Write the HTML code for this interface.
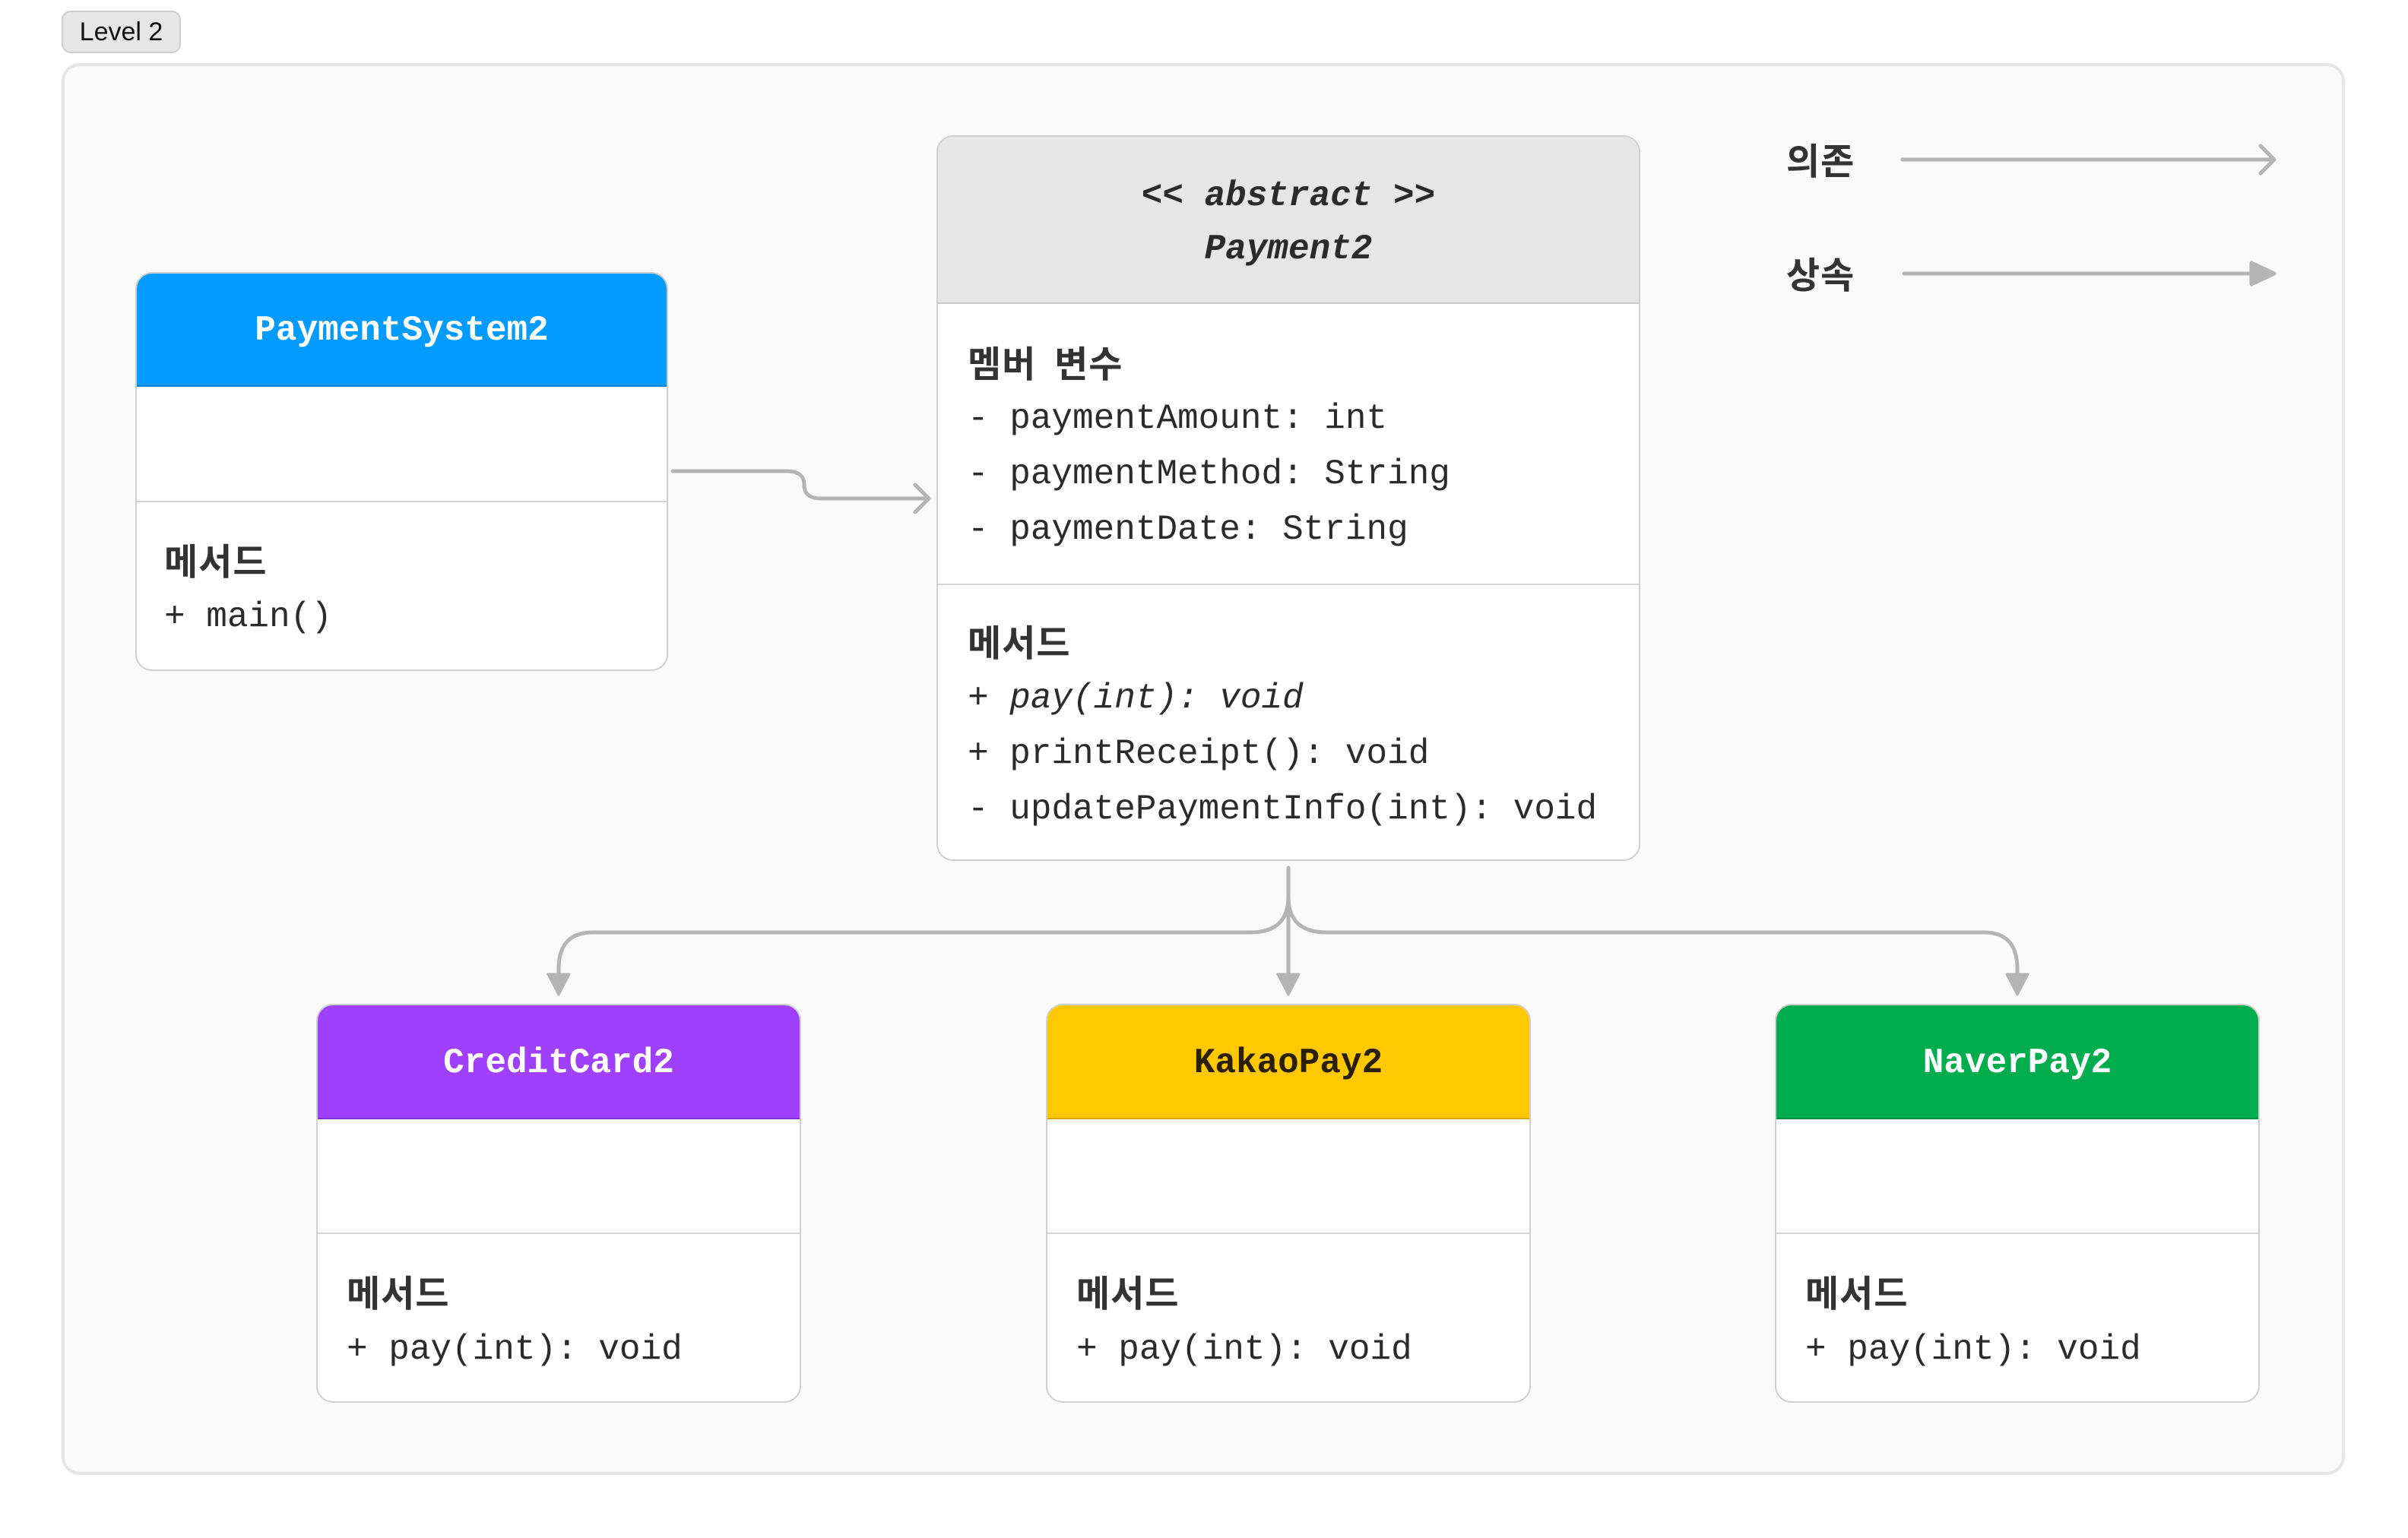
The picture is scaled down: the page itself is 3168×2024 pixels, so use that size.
<!DOCTYPE html>
<html><head><meta charset="utf-8"><style>
*{margin:0;padding:0;box-sizing:border-box}
body{width:3168px;height:2024px;background:#fff;position:relative;overflow:hidden;font-family:"Liberation Mono","Noto Sans CJK KR",monospace;color:#2b2b2b}
.badge{position:absolute;left:81px;top:14px;width:157px;height:56px;background:#e6e6e6;border:2px solid #cfcfcf;border-radius:12px;font-family:"Liberation Sans",sans-serif;font-size:34px;line-height:52px;text-align:center;color:#111}
.wrap{position:absolute;left:81px;top:83px;width:3004px;height:1858px;background:#fafafa;border:4px solid #e6e6e6;border-radius:24px}
.box{position:absolute;background:#fff;border:2px solid #cfcfcf;border-radius:22px;overflow:hidden}
.hd{position:absolute;left:0;right:0;top:0;border-bottom:2px solid rgba(0,0,0,.18);text-align:center;font-weight:bold;font-size:46px}
.sep{position:absolute;left:0;right:0;height:2px;background:#d4d4d4}
.t{position:absolute;white-space:pre;font-size:46px;line-height:60px}
.k{font-family:"Noto Sans CJK KR",sans-serif;font-weight:bold;font-size:48px;letter-spacing:1px;color:#333}
</style></head><body>
<div class="badge">Level 2</div>
<div class="wrap"></div>

<!-- PaymentSystem2 -->
<div class="box" style="left:178px;top:358px;width:701px;height:525px">
 <div class="hd" style="height:149px;background:#039bff;color:#fff;line-height:150px;border-bottom-color:#0383d8">PaymentSystem2</div>
 <div class="sep" style="top:299px"></div>
 <div class="t k" style="left:36px;top:345px">메서드</div>
 <div class="t" style="left:36px;top:422px">+ main()</div>
</div>

<!-- Payment2 -->
<div class="box" style="left:1232px;top:178px;width:926px;height:955px">
 <div class="hd" style="height:220px;background:#e6e6e6;color:#2b2b2b;font-style:italic;border-bottom-color:#c8c8c8">
  <div class="t" style="left:0;right:0;top:48px">&lt;&lt; abstract &gt;&gt;</div>
  <div class="t" style="left:0;right:0;top:118px">Payment2</div>
 </div>
 <div class="t k" style="left:39px;top:265px">멤버  변수</div>
 <div class="t" style="left:39px;top:341px">- paymentAmount: int</div>
 <div class="t" style="left:39px;top:414px">- paymentMethod: String</div>
 <div class="t" style="left:39px;top:487px">- paymentDate: String</div>
 <div class="sep" style="top:588px"></div>
 <div class="t k" style="left:39px;top:632px">메서드</div>
 <div class="t" style="left:39px;top:709px">+ <i>pay(int): void</i></div>
 <div class="t" style="left:39px;top:782px">+ printReceipt(): void</div>
 <div class="t" style="left:39px;top:855px">- updatePaymentInfo(int): void</div>
</div>

<!-- children -->
<div class="box" style="left:416px;top:1321px;width:638px;height:525px">
 <div class="hd" style="height:150px;background:#a040ff;color:#fff;line-height:152px;border-bottom-color:#8432d8">CreditCard2</div>
 <div class="sep" style="top:299px"></div>
 <div class="t k" style="left:38px;top:345px">메서드</div>
 <div class="t" style="left:38px;top:423px">+ pay(int): void</div>
</div>
<div class="box" style="left:1376px;top:1321px;width:638px;height:525px">
 <div class="hd" style="height:150px;background:#ffc800;color:#2a2000;line-height:152px;border-bottom-color:#d8a800">KakaoPay2</div>
 <div class="sep" style="top:299px"></div>
 <div class="t k" style="left:38px;top:345px">메서드</div>
 <div class="t" style="left:38px;top:423px">+ pay(int): void</div>
</div>
<div class="box" style="left:2335px;top:1321px;width:638px;height:525px">
 <div class="hd" style="height:150px;background:#00ad4e;color:#fff;line-height:152px;border-bottom-color:#008f40">NaverPay2</div>
 <div class="sep" style="top:299px"></div>
 <div class="t k" style="left:38px;top:345px">메서드</div>
 <div class="t" style="left:38px;top:423px">+ pay(int): void</div>
</div>

<!-- legend -->
<div class="t k" style="left:2350px;top:178px">의존</div>
<div class="t k" style="left:2350px;top:328px">상속</div>

<svg width="3168" height="2024" style="position:absolute;left:0;top:0" fill="none" stroke="#b4b4b4" stroke-width="5" stroke-linecap="round" stroke-linejoin="round">
 <path d="M2503 210 H2990 M2974 192 L2992 210 L2974 228"/>
 <path d="M2505 360 H2965"/>
 <path d="M2962 346 L2992 360 L2962 374 Z" fill="#b4b4b4"/>
 <path d="M885 620 H1035 Q1058 620 1058 638 Q1058 656 1080 656 H1220 M1204 638 L1222 656 L1204 674"/>
 <path d="M1695 1142 V1180 Q1695 1227 1645 1227 H780 Q735 1227 735 1275 V1285"/>
 <path d="M1695 1180 Q1695 1227 1745 1227 H2610 Q2654 1227 2654 1275 V1285"/>
 <path d="M1695 1180 V1285"/>
 <g fill="#b4b4b4" stroke-width="3">
  <path d="M721 1282 L749 1282 L735 1309 Z"/>
  <path d="M1681 1282 L1709 1282 L1695 1309 Z"/>
  <path d="M2640 1282 L2668 1282 L2654 1309 Z"/>
 </g>
</svg>
</body></html>
